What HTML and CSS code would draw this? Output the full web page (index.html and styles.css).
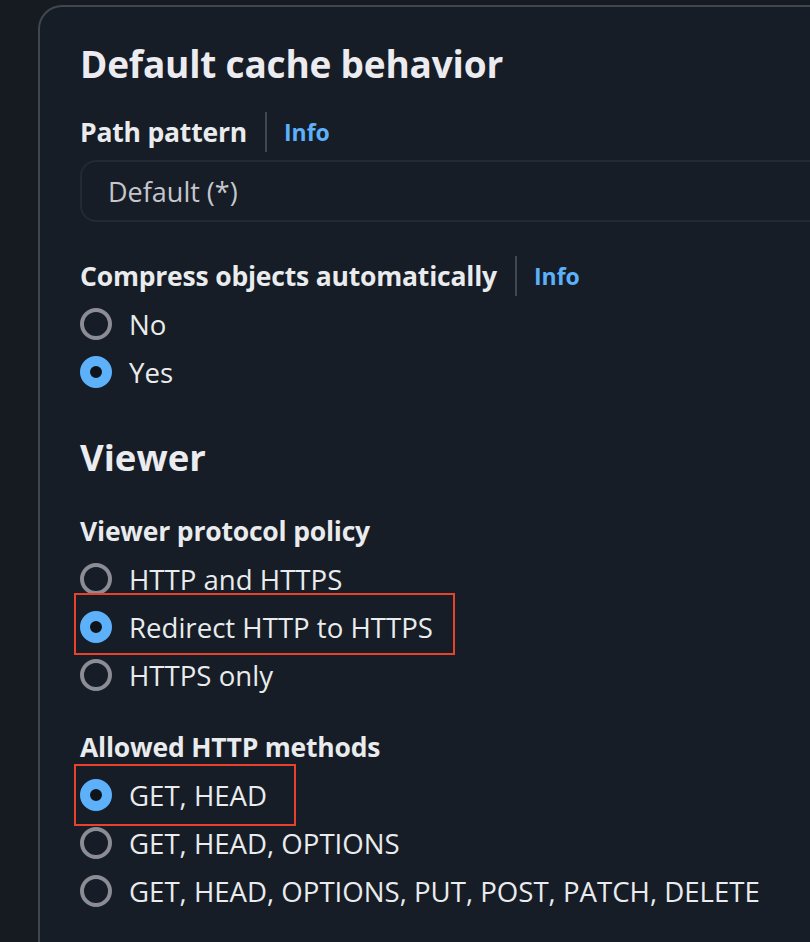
FILE: index.html
```html
<!DOCTYPE html>
<html lang="en">
<head>
<meta charset="utf-8">
<title>Default cache behavior</title>
<link rel="stylesheet" href="styles.css">
</head>
<body>
<div class="card">
  <h2 class="title">Default cache behavior</h2>

  <div class="field-label">
    <span class="label-text">Path pattern</span>
    <span class="sep"></span>
    <a class="info" href="#">Info</a>
  </div>
  <div class="input">Default (*)</div>

  <div class="field-label field-gap">
    <span class="label-text">Compress objects automatically</span>
    <span class="sep"></span>
    <a class="info" href="#">Info</a>
  </div>
  <div class="radio-group">
    <label class="radio"><span class="dot"></span><span class="rtext">No</span></label>
    <label class="radio"><span class="dot on"></span><span class="rtext">Yes</span></label>
  </div>

  <h3 class="section">Viewer</h3>

  <div class="field-label plain gap-vp">
    <span class="label-text">Viewer protocol policy</span>
  </div>
  <div class="radio-group">
    <label class="radio"><span class="dot"></span><span class="rtext">HTTP and HTTPS</span></label>
    <label class="radio hl"><span class="dot on"></span><span class="rtext">Redirect HTTP to HTTPS</span><span class="mark mark-a"></span></label>
    <label class="radio"><span class="dot"></span><span class="rtext">HTTPS only</span></label>
  </div>

  <div class="field-label plain gap-am">
    <span class="label-text">Allowed HTTP methods</span>
  </div>
  <div class="radio-group">
    <label class="radio hl"><span class="dot on"></span><span class="rtext">GET, HEAD</span><span class="mark mark-b"></span></label>
    <label class="radio"><span class="dot"></span><span class="rtext">GET, HEAD, OPTIONS</span></label>
    <label class="radio"><span class="dot"></span><span class="rtext">GET, HEAD, OPTIONS, PUT, POST, PATCH, DELETE</span></label>
  </div>
</div>
</body>
</html>
```
FILE: styles.css
```css
html, body {
  margin: 0;
  padding: 0;
  background: #161b22;
  overflow: hidden;
}

body {
  font-family: "Open Sans", "Noto Sans", sans-serif;
  color: #e9ebed;
  height: 942px;
}

.card {
  margin: 5px 0 0 38px;
  width: 900px;
  min-height: 1000px;
  border: 2px solid #414750;
  border-right: none;
  border-radius: 24px 0 0 0;
  background: #161d26;
  padding: 33px 0 0 40px;
  box-sizing: border-box;
}

.title {
  margin: 0;
  font-size: 37px;
  line-height: 48px;
  font-weight: 700;
  color: #ebebf0;
  letter-spacing: -0.2px;
}

.field-label {
  display: flex;
  align-items: center;
  height: 44px;
  margin-top: 22px;
}

.field-gap {
  margin-top: 32px;
}

.label-text {
  font-size: 26.5px;
  font-weight: 700;
  color: #e9ebed;
  letter-spacing: -0.2px;
}

.sep {
  width: 2px;
  height: 40px;
  background: #414750;
  margin: 0 17px 0 18px;
}

.info {
  font-size: 23px;
  font-weight: 700;
  color: #5cb1fa;
  text-decoration: none;
}

.input {
  margin-top: 6px;
  height: 62px;
  box-sizing: border-box;
  border: 2px solid #232a34;
  border-right: none;
  border-radius: 16px 0 0 16px;
  padding-left: 26px;
  display: flex;
  align-items: center;
  font-size: 27px;
  color: #c6c6cd;
}

.radio-group {
  display: flex;
  flex-direction: column;
  margin-top: 2px;
}

.radio {
  position: relative;
  display: flex;
  align-items: center;
  height: 48px;
}

.dot {
  width: 32px;
  height: 32px;
  box-sizing: border-box;
  border: 4px solid #8c8c94;
  border-radius: 50%;
  flex: none;
  margin-right: 17px;
}

.dot.on {
  border: 10px solid #5cb1fa;
  background: #0f141a;
}

.rtext {
  font-size: 27.6px;
  color: #e9ebed;
  letter-spacing: 0;
}

.section {
  margin: 37px 0 0;
  font-size: 36.5px;
  line-height: 48px;
  font-weight: 700;
  color: #ebebf0;
}

.plain {
  margin-top: 28px;
}

.gap-am {
  margin-top: 26px;
}

.mark {
  position: absolute;
  left: -6px;
  top: -10px;
  height: 62px;
  box-sizing: border-box;
  border: 2px solid #e8412c;
  pointer-events: none;
}

.mark-a { width: 381px; }
.mark-b { width: 222px; top: -7px; }
```
